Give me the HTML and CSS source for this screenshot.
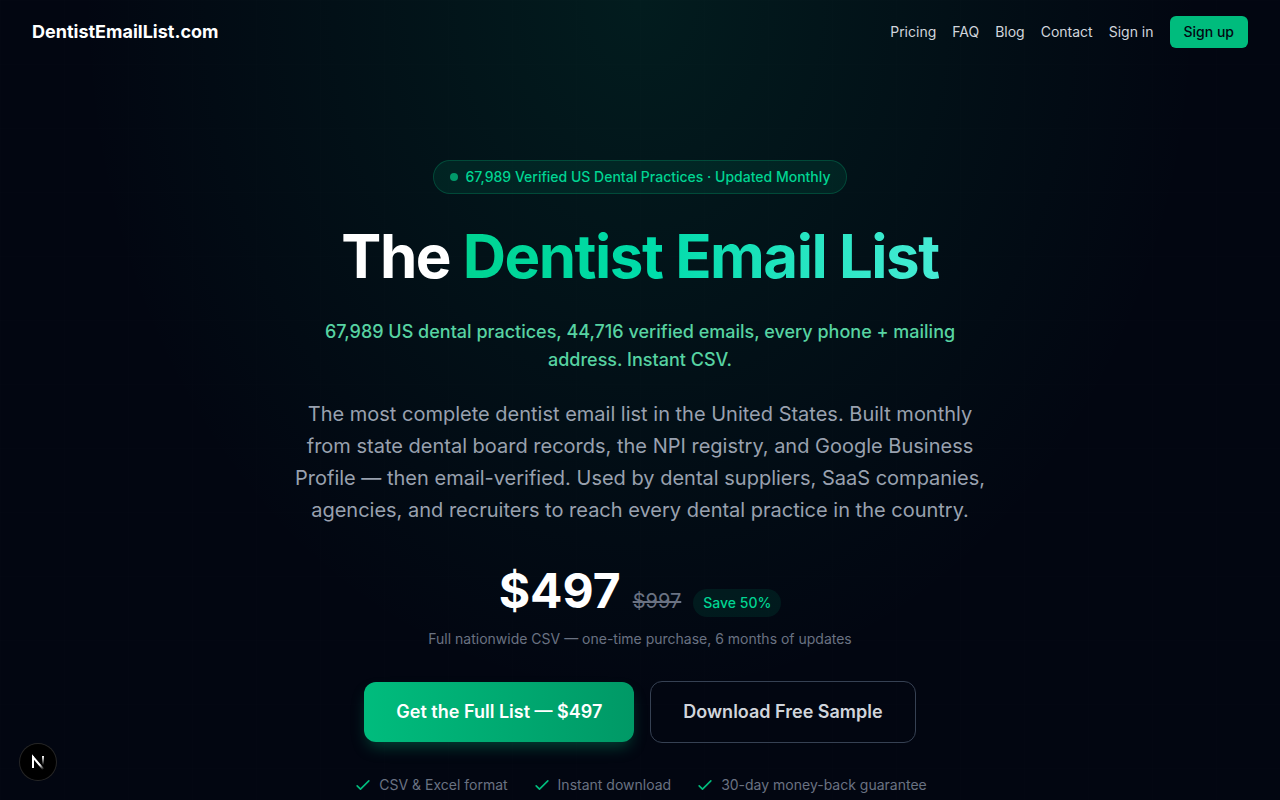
FILE: index.html
```
<!DOCTYPE html>
<html lang="en">
<head>
    <meta charset="UTF-8">
    <meta name="viewport" content="width=device-width, initial-scale=1.0">
    <title>DentistEmailList.com</title>
    <link rel="stylesheet" href="styles.css">
</head>
<body>
    <div class="page">
        <header class="header">
            <a class="logo" href="#">DentistEmailList.com</a>
            <nav class="nav">
                <a href="#pricing">Pricing</a>
                <a href="#faq">FAQ</a>
                <a href="#blog">Blog</a>
                <a href="#contact">Contact</a>
                <a href="#signin">Sign in</a>
                <a class="signup" href="#signup">Sign up</a>
            </nav>
        </header>

        <main class="hero">
            <div class="badge"><span class="dot"></span>67,989 Verified US Dental Practices · Updated Monthly</div>
            <h1>The <span class="gradient">Dentist Email List</span></h1>
            <p class="subtitle">67,989 US dental practices, 44,716 verified emails, every phone + mailing address. Instant CSV.</p>
            <p class="description">The most complete dentist email list in the United States. Built monthly from state dental board records, the NPI registry, and Google Business Profile — then email-verified. Used by dental suppliers, SaaS companies, agencies, and recruiters to reach every dental practice in the country.</p>

            <div class="price-row">
                <span class="price">$497</span>
                <s class="old-price">$997</s>
                <span class="save">Save 50%</span>
            </div>
            <p class="note">Full nationwide CSV — one-time purchase, 6 months of updates</p>

            <div class="actions">
                <button class="btn btn-primary" type="button">Get the Full List — $497</button>
                <button class="btn btn-outline" type="button">Download Free Sample</button>
            </div>

            <ul class="features">
                <li>
                    <svg class="check" viewBox="0 0 24 24"><path d="M5 13l4 4L19 7"/></svg>
                    CSV &amp; Excel format
                </li>
                <li>
                    <svg class="check" viewBox="0 0 24 24"><path d="M5 13l4 4L19 7"/></svg>
                    Instant download
                </li>
                <li>
                    <svg class="check" viewBox="0 0 24 24"><path d="M5 13l4 4L19 7"/></svg>
                    30-day money-back guarantee
                </li>
            </ul>
        </main>
    </div>

    <button class="dev-button" type="button" aria-label="Open dev tools">
        <svg viewBox="0 0 36 36">
            <defs>
                <linearGradient id="diagonal" gradientUnits="userSpaceOnUse" x1="19" y1="18" x2="24" y2="25">
                    <stop offset="0.3" stop-color="#fff"/>
                    <stop offset="1" stop-color="#fff" stop-opacity="0"/>
                </linearGradient>
                <linearGradient id="stem" gradientUnits="userSpaceOnUse" x1="23" y1="12" x2="23" y2="21">
                    <stop offset="0" stop-color="#fff"/>
                    <stop offset="1" stop-color="#fff" stop-opacity="0"/>
                </linearGradient>
            </defs>
            <path d="M13 24V13L24 26" fill="none" stroke="url(#diagonal)" stroke-width="2"/>
            <path d="M13 24V12" fill="none" stroke="#fff" stroke-width="2"/>
            <path d="M23 12V21" fill="none" stroke="url(#stem)" stroke-width="2"/>
        </svg>
    </button>
</body>
</html>
```
FILE: styles.css
```
* {
    box-sizing: border-box;
}

body {
    margin: 0;
    background: #020611;
    color: #fff;
    font-family: Inter, "Liberation Sans", sans-serif;
    -webkit-font-smoothing: antialiased;
}

a {
    color: inherit;
    text-decoration: none;
}

h1, p, ul {
    margin: 0;
    padding: 0;
}

button {
    font-family: inherit;
    cursor: pointer;
}

.page {
    min-height: 100vh;
    background:
        linear-gradient(rgba(255, 255, 255, 0.004) 1px, transparent 1px) 0 0 / 64px 64px,
        linear-gradient(90deg, rgba(255, 255, 255, 0.004) 1px, transparent 1px) 0 0 / 64px 64px,
        radial-gradient(ellipse 560px 700px at 50% 0, rgba(0, 188, 125, 0.12), transparent),
        #020611;
}

.header {
    display: flex;
    align-items: center;
    justify-content: space-between;
    height: 64px;
    padding: 0 32px;
}

.logo {
    font-size: 18px;
    font-weight: 700;
    line-height: 28px;
}

.nav {
    display: flex;
    align-items: center;
    gap: 16px;
    font-size: 14px;
    line-height: 20px;
    color: #d1d5dc;
}

.signup {
    padding: 6px 14px;
    border-radius: 6px;
    background: #00bc7d;
    color: #030712;
    font-weight: 500;
}

.hero {
    display: flex;
    flex-direction: column;
    align-items: center;
    padding: 96px 24px 64px;
    text-align: center;
}

.badge {
    display: flex;
    align-items: center;
    gap: 8px;
    padding: 6px 16px;
    border: 1px solid rgba(0, 188, 125, 0.25);
    border-radius: 17px;
    background: rgba(0, 188, 125, 0.1);
    color: #00d492;
    font-size: 14px;
    font-weight: 500;
    line-height: 20px;
}

.dot {
    width: 8px;
    height: 8px;
    border-radius: 50%;
    background: #02996a;
}

h1 {
    margin-top: 32px;
    font-size: 60px;
    font-weight: 700;
    line-height: 60px;
    letter-spacing: -0.025em;
}

.gradient {
    background: linear-gradient(to right, #00d492, #00dcaa 40%, #46ecd5);
    -webkit-background-clip: text;
    background-clip: text;
    color: transparent;
}

.subtitle {
    max-width: 672px;
    margin-top: 32px;
    color: #57d3a2;
    font-size: 18px;
    font-weight: 500;
    line-height: 28px;
}

.description {
    max-width: 700px;
    margin-top: 24px;
    color: #99a1af;
    font-size: 20px;
    line-height: 32px;
}

.price-row {
    display: flex;
    align-items: baseline;
    gap: 12px;
    margin-top: 41px;
}

.price {
    font-size: 48px;
    font-weight: 700;
    line-height: 48px;
}

.old-price {
    color: #6a7282;
    font-size: 20px;
}

.save {
    padding: 4px 10px;
    border-radius: 14px;
    background: rgba(0, 188, 125, 0.1);
    color: #00d492;
    font-size: 14px;
    font-weight: 500;
    line-height: 20px;
}

.note {
    margin-top: 12px;
    color: #6a7282;
    font-size: 14px;
    line-height: 20px;
}

.actions {
    display: flex;
    align-items: center;
    gap: 16px;
    margin-top: 32px;
}

.btn {
    padding: 16px 32px;
    border: 0;
    border-radius: 12px;
    font-size: 18px;
    font-weight: 600;
    line-height: 28px;
}

.btn-primary {
    background: linear-gradient(to right, #00bc7d, #009966);
    box-shadow: 0 8px 16px -4px rgba(0, 188, 125, 0.35);
    color: #fff;
}

.btn-outline {
    border: 1px solid #364153;
    background: transparent;
    color: #d1d5dc;
}

.features {
    display: flex;
    gap: 24px;
    margin-top: 32px;
    color: #6a7282;
    font-size: 14px;
    line-height: 20px;
    list-style: none;
}

.features li {
    display: flex;
    align-items: center;
    gap: 6px;
}

.check {
    width: 20px;
    height: 20px;
    fill: none;
    stroke: #00bc7d;
    stroke-width: 2;
    stroke-linecap: round;
    stroke-linejoin: round;
}

/* floats over the page in the corner */
.dev-button {
    position: fixed;
    bottom: 20px;
    left: 20px;
    width: 36px;
    height: 36px;
    padding: 0;
    border: 0;
    border-radius: 50%;
    background: #000;
    box-shadow: 0 0 0 1px #262626;
}

.dev-button svg {
    display: block;
    width: 36px;
    height: 36px;
}
```
